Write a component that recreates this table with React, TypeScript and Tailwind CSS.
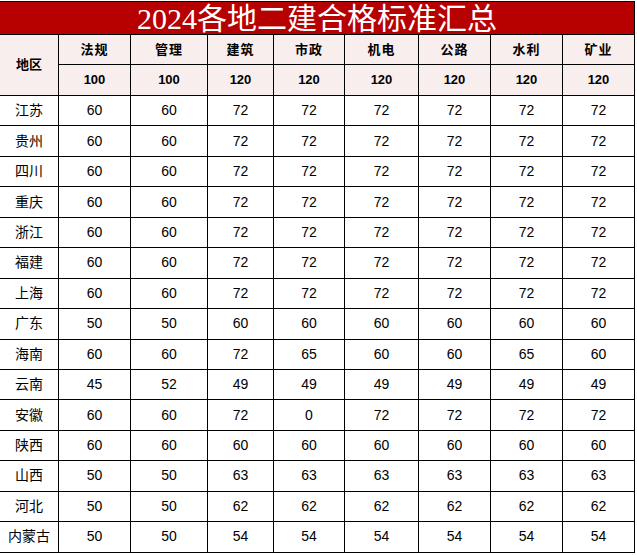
import { Fragment } from "react";

const subjects = [
  { name: "法规", full: 100 },
  { name: "管理", full: 100 },
  { name: "建筑", full: 120 },
  { name: "市政", full: 120 },
  { name: "机电", full: 120 },
  { name: "公路", full: 120 },
  { name: "水利", full: 120 },
  { name: "矿业", full: 120 },
];

const rows: [string, number[]][] = [
  ["江苏", [60, 60, 72, 72, 72, 72, 72, 72]],
  ["贵州", [60, 60, 72, 72, 72, 72, 72, 72]],
  ["四川", [60, 60, 72, 72, 72, 72, 72, 72]],
  ["重庆", [60, 60, 72, 72, 72, 72, 72, 72]],
  ["浙江", [60, 60, 72, 72, 72, 72, 72, 72]],
  ["福建", [60, 60, 72, 72, 72, 72, 72, 72]],
  ["上海", [60, 60, 72, 72, 72, 72, 72, 72]],
  ["广东", [50, 50, 60, 60, 60, 60, 60, 60]],
  ["海南", [60, 60, 72, 65, 60, 60, 65, 60]],
  ["云南", [45, 52, 49, 49, 49, 49, 49, 49]],
  ["安徽", [60, 60, 72, 0, 72, 72, 72, 72]],
  ["陕西", [60, 60, 60, 60, 60, 60, 60, 60]],
  ["山西", [50, 50, 63, 63, 63, 63, 63, 63]],
  ["河北", [50, 50, 62, 62, 62, 62, 62, 62]],
  ["内蒙古", [50, 50, 54, 54, 54, 54, 54, 54]],
];

const App = () => {
  return (
    <div className="w-[637px] h-[555px] bg-white pt-px font-['Liberation_Sans','Noto_Sans_CJK_SC',sans-serif] text-black">
      <div className="w-[635px] bg-black pt-px pr-px pb-px">
        <div className="grid grid-cols-[58px_71px_76px_65px_70px_73px_71px_71px_71px] grid-rows-[32px_29px_30px_repeat(15,29.45px)] gap-px">
          {/* 标题 */}
          <div className="col-span-9 bg-[#b70000] flex items-end justify-center">
            <span className="text-[30px] leading-[31px] text-white font-['Liberation_Serif','Noto_Sans_CJK_SC',serif]">
              2024各地二建合格标准汇总
            </span>
          </div>

          {/* 表头 */}
          <div className="row-span-2 bg-[#f9eeee] flex items-center justify-center text-[13px] font-bold">
            地区
          </div>
          {subjects.map((s) => (
            <div
              key={s.name}
              className="bg-[#f9eeee] flex items-center justify-center text-[13px] font-bold tracking-[1px]"
            >
              {s.name}
            </div>
          ))}
          {subjects.map((s) => (
            <div
              key={s.name + "-full"}
              className="bg-[#f9eeee] flex items-center justify-center text-[13px] font-bold"
            >
              {s.full}
            </div>
          ))}

          {/* 数据 */}
          {rows.map(([region, scores]) => (
            <Fragment key={region}>
              <div className="bg-white flex items-center justify-center text-[14px]">
                {region}
              </div>
              {scores.map((v, i) => (
                <div
                  key={region + i}
                  className="bg-white flex items-center justify-center text-[14px]"
                >
                  {v}
                </div>
              ))}
            </Fragment>
          ))}
        </div>
      </div>
    </div>
  );
};

export default App;
